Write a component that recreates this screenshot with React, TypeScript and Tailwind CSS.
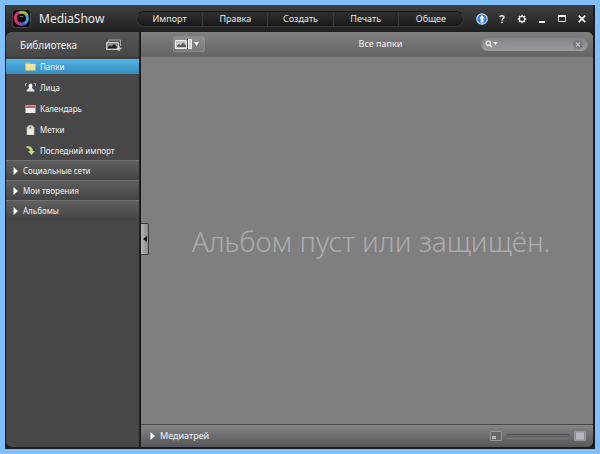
import {useState} from 'react';
import type {ReactNode} from 'react';

interface LibraryItem {
    id: string;
    label: string;
    icon: ReactNode;
}

const MENU = ['Импорт', 'Правка', 'Создать', 'Печать', 'Общее'];
const SECTIONS = ['Социальные сети', 'Мои творения', 'Альбомы'];

const Logo = () => (
    <svg className="h-[19px] w-[19px] shrink-0" viewBox="0 0 19 19" aria-hidden="true">
        <rect x="0.5" y="0.5" width="18" height="18" rx="3" fill="#0c0c0c" stroke="#484848"/>
        <g fill="none" strokeWidth="3" strokeLinecap="round">
            <path d="M9 15.200C5.500 15.400 3.400 12.500 3.400 9.500" stroke="#d8305c"/>
            <path d="M3.400 9C3.400 6 5.400 3.800 8 3.600" stroke="#ee2f7c"/>
            <path d="M8.600 3.500C11.400 3 14 4.400 15 6.600" stroke="#8cc43c"/>
            <path d="M15.200 7.500C16 10.500 14.500 13.600 12 14.600" stroke="#3a9ee0"/>
            <path d="M11.600 14.700C10.400 15.300 9 15.300 8 14.900" stroke="#6c4cd0"/>
        </g>
        <circle cx="9.400" cy="9.200" r="3.600" fill="#060606"/>
        <path d="M7.800 8C8.600 7 10.400 7 11.200 8" fill="none" stroke="#a8a8a8"/>
    </svg>
);

const FolderIcon = () => (
    <svg className="h-[9px] w-[11px]" viewBox="0 0 11 9" aria-hidden="true">
        <path d="M0.5 0.5h4l1 1.2H10.500V4H0.500z" fill="#dcc070"/>
        <path d="M0.5 2.600H10.5V8.500H0.5z" fill="#f6e08a"/>
        <path d="M0.5 3h10" stroke="#fff3b8"/>
    </svg>
);

const FacesIcon = () => (
    <svg className="h-[9px] w-[11px]" viewBox="0 0 11 9" aria-hidden="true">
        <path d="M2 0.5H0.5V3M9 0.5h1.500V3" fill="none" stroke="#a8a8a8"/>
        <ellipse cx="5.5" cy="2.900" rx="1.900" ry="2.300" fill="#f4f4f4"/>
        <path d="M1.500 8.500c0-2 1.700-2.800 2.900-3.400h2.200C7.800 5.700 9.500 6.500 9.500 8.500z" fill="#e4e4e4"/>
    </svg>
);

const CalendarIcon = () => (
    <svg className="h-[9px] w-[11px]" viewBox="0 0 11 9" aria-hidden="true">
        <path d="M0.500 1H10.500V9H0.500z" fill="#f2eded"/>
        <path d="M0.500 1H10.500V4H0.500z" fill="#c75a5c"/>
        <path d="M0.500 1.500h10" stroke="#e19a9a"/>
    </svg>
);

const TagIcon = () => (
    <svg className="h-[10px] w-[11px]" viewBox="0 0 11 10" aria-hidden="true">
        <path d="M4 0.200h3L9.300 2.600V10H1.700V2.600z" fill="#dcdcc6"/>
        <circle cx="5.500" cy="2.400" r="1" fill="#686858"/>
        <path d="M2.700 4.500h5.600V9H2.700z" fill="#f0f0e4"/>
    </svg>
);

const ImportIcon = () => (
    <svg className="h-[9px] w-[11px]" viewBox="0 0 11 9" aria-hidden="true">
        <path d="M1.500 0.300C5 0 7.800 0.800 7.800 5h2L6.500 9 3 5h2C5 3 4 2 1.500 2z" fill="#b9e07a"/>
    </svg>
);

const ITEMS: LibraryItem[] = [
    {id: 'folders', label: 'Папки', icon: <FolderIcon/>},
    {id: 'faces', label: 'Лица', icon: <FacesIcon/>},
    {id: 'calendar', label: 'Календарь', icon: <CalendarIcon/>},
    {id: 'tags', label: 'Метки', icon: <TagIcon/>},
    {id: 'last', label: 'Последний импорт', icon: <ImportIcon/>},
];

const Arrow = () => (
    <svg className="h-[8px] w-[5px] shrink-0" viewBox="0 0 5 8" aria-hidden="true">
        <path d="M0.500 0L5 4 0.500 8z" fill="#fff"/>
    </svg>
);

// Кнопки в правой части заголовка
const WINDOW_BUTTONS: { label: string; icon: ReactNode }[] = [
    {
        label: 'Обновление',
        icon: (
            <svg className="h-3 w-3" viewBox="0 0 12 12" aria-hidden="true">
                <circle cx="6" cy="6" r="5.200" fill="#1f78ea" stroke="#cfe2f8" strokeWidth="1.200"/>
                <path d="M6 2.200L9 5.600H7.400V9.400H4.600V5.600H3z" fill="#fff"/>
            </svg>
        ),
    },
    {
        label: 'Справка',
        icon: (
            <svg className="h-3 w-3" viewBox="0 0 12 12" aria-hidden="true">
                <path d="M4 4.200C4 2.200 8 2.200 8 4.200C8 5.600 6 5.600 6 7.400" fill="none" stroke="#e6e6e6"
                      strokeWidth="1.400"/>
                <path d="M5.200 8.500h1.600v1.500H5.200z" fill="#e6e6e6"/>
            </svg>
        ),
    },
    {
        label: 'Настройки',
        icon: (
            <svg className="h-3 w-3" viewBox="0 0 12 12" aria-hidden="true">
                <circle cx="6" cy="6" r="2.700" fill="none" stroke="#e6e6e6" strokeWidth="1.300"/>
                <path
                    d="M6 1.700v1.500M6 8.800v1.500M1.700 6h1.500M8.800 6h1.500M3 3l1.100 1.100M7.900 7.900L9 9M9 3L7.900 4.100M4.100 7.900L3 9"
                    stroke="#e6e6e6" strokeWidth="1.500"/>
            </svg>
        ),
    },
    {
        label: 'Свернуть',
        icon: (
            <svg className="h-3 w-3" viewBox="0 0 12 12" aria-hidden="true">
                <path d="M3 9h6" stroke="#f2f2f2" strokeWidth="2"/>
            </svg>
        ),
    },
    {
        label: 'Развернуть',
        icon: (
            <svg className="h-3 w-3" viewBox="0 0 12 12" aria-hidden="true">
                <path d="M2.500 3.500v5h7v-5" fill="none" stroke="#ddd"/>
                <path d="M2 3h8" stroke="#f2f2f2" strokeWidth="2"/>
            </svg>
        ),
    },
    {
        label: 'Закрыть',
        icon: (
            <svg className="h-3 w-3" viewBox="0 0 12 12" aria-hidden="true">
                <path d="M2.700 2.700l6.500 6.500M9.200 2.700L2.700 9.200" stroke="#f4f4f4" strokeWidth="1.700"/>
            </svg>
        ),
    },
];

function TitleBar() {
    return (
        <header className="flex h-[27px] shrink-0 items-center bg-linear-to-b from-[#404040] to-[#202020] pr-px">
            <div className="flex w-[130px] shrink-0 items-center gap-2 pl-[6px]">
                <Logo/>
                <h1 className="text-[12px] leading-4 text-[#ececec]">MediaShow</h1>
            </div>
            <nav
                className="grid h-4 flex-1 grid-cols-5 overflow-hidden rounded-full border border-[#383838] border-t-[#161616] bg-linear-to-b from-[#303030] to-[#191919]">
                {MENU.map((name, i) => (
                    <button
                        key={name}
                        className={`text-center text-[9px] leading-[14px] text-[#e8e8e8] ${i > 0 ? 'border-l border-[#3c3c3c]' : ''}`}
                    >
                        {name}
                    </button>
                ))}
            </nav>
            <div className="ml-2 flex shrink-0">
                {WINDOW_BUTTONS.map(({label, icon}) => (
                    <button key={label} aria-label={label} className="flex w-5 items-center justify-center">
                        {icon}
                    </button>
                ))}
            </div>
        </header>
    );
}

function Sidebar() {
    const [active, setActive] = useState('folders');

    return (
        <aside className="flex w-[133px] shrink-0 flex-col rounded-tl-md rounded-bl-md bg-[#474747]">
            <div
                className="flex h-[26px] items-center justify-between rounded-tl-md border-b border-[#333] bg-linear-to-b from-[#565656] to-[#464646] pr-[17px] pl-[14px]">
                <h2 className="text-[10px] leading-4 text-[#f0f0f0]">Библиотека</h2>
                <button aria-label="Добавить альбом">
                    <svg className="h-3 w-4" viewBox="0 0 16 12" aria-hidden="true">
                        <path d="M2.500 3V1H14.500v6" fill="none" stroke="#a8a8a8"/>
                        <path d="M0.500 3.500H12.500V10.500H0.500z" fill="#8c8c8c" stroke="#cfcfcf"/>
                        <path d="M2 9.500V8l2-1.500 1.500 1L8 5l3 3v1.500z" fill="#1e1e1e"/>
                        <path d="M13 7v5M10.500 9.500h5" stroke="#d0d0d0" strokeWidth="1.400"/>
                    </svg>
                </button>
            </div>

            <ul className="flex flex-col gap-[6px] pt-px pb-[2px]">
                {ITEMS.map(item => (
                    <li key={item.id}>
                        <button
                            onClick={() => setActive(item.id)}
                            className={`flex h-[15px] w-full items-center gap-1 pl-[19px] text-[8px] leading-[14px] text-[#f4f4f4] ${active === item.id ? 'bg-linear-to-b from-[#50b4e4] to-[#388cc0]' : ''}`}
                        >
                            <span className="flex w-[11px] shrink-0 justify-center">{item.icon}</span>
                            {item.label}
                        </button>
                    </li>
                ))}
            </ul>

            {SECTIONS.map(name => (
                <button
                    key={name}
                    className="flex h-5 items-center gap-[5px] border-t border-[#707070] bg-linear-to-b from-[#5e5e5e] to-[#444] pl-[7px] text-[8px] leading-[14px] text-[#f4f4f4]"
                >
                    <Arrow/>
                    {name}
                </button>
            ))}
        </aside>
    );
}

function Toolbar() {
    const [query, setQuery] = useState('');

    return (
        <div
            className="grid h-[25px] shrink-0 grid-cols-[1fr_auto_1fr] items-center rounded-tr-md border-b border-[#6a6a6a] bg-linear-to-b from-[#808080] to-[#656565] pr-[5px] pl-8">
            <button
                aria-label="Вид"
                className="flex h-4 w-8 items-center justify-between rounded-xs border border-[#8a8a8a] bg-linear-to-b from-[#8e8e8e] to-[#7a7a7a] px-px"
            >
                <svg className="h-3 w-[17px]" viewBox="0 0 17 12" aria-hidden="true">
                    <path d="M0.500 2.500H11.500V10.500H0.500z" fill="#c4c4c4" stroke="#f0f0f0"/>
                    <path d="M2 9V8l2-2 1.500 1.500L8 4.500l3 3V9z" fill="#5a5a5a"/>
                    <path d="M13.500 1.500h3v9h-3z" fill="#d0d0d0" stroke="#f0f0f0"/>
                    <path d="M12.500 1v10" stroke="#4a4a4a"/>
                </svg>
                <svg className="mr-1 h-1 w-[5px]" viewBox="0 0 5 4" aria-hidden="true">
                    <path d="M0 0h5L2.500 4z" fill="#eee"/>
                </svg>
            </button>
            <span className="text-[9px] leading-4 text-[#f4f4f4]">Все папки</span>
            <div
                className="flex h-[13px] w-[107px] items-center justify-self-end rounded-full bg-linear-to-b from-[#85868c] to-[#9a9ba0] px-1">
                <svg className="h-2 w-[13px] shrink-0" viewBox="0 0 13 8" aria-hidden="true">
                    <circle cx="3.300" cy="3.300" r="2.200" fill="none" stroke="#f2f2f2" strokeWidth="1.300"/>
                    <path d="M5 5l2 2.300" stroke="#f2f2f2" strokeWidth="1.500"/>
                    <path d="M8 2h5L10.500 5z" fill="#f2f2f2"/>
                </svg>
                <input
                    type="text"
                    aria-label="Поиск"
                    value={query}
                    onChange={e => setQuery(e.target.value)}
                    className="h-full min-w-0 flex-1 bg-transparent px-1 text-[9px] text-white outline-none"
                />
                <button aria-label="Очистить" onClick={() => setQuery('')}>
                    <svg className="h-[9px] w-[11px]" viewBox="0 0 11 9" aria-hidden="true">
                        <rect width="10" height="9" rx="4.500" fill="#7a7b80"/>
                        <path d="M3.200 2.700l3.600 3.600M6.800 2.700L3.200 6.300" stroke="#c4c4c8" strokeWidth="1.200"/>
                    </svg>
                </button>
            </div>
        </div>
    );
}

function TrayBar() {
    return (
        <footer
            className="flex h-[23px] shrink-0 items-center justify-between rounded-br-md border-t border-[#4a4a4a] bg-linear-to-b from-[#848486] to-[#56575c] pr-[7px] pl-[9px]">
            <button className="flex items-center gap-[5px] text-[9px] leading-4 text-[#f4f4f4]">
                <Arrow/>
                Медиатрей
            </button>
            <div className="flex items-center gap-1">
                <svg className="h-[10px] w-3" viewBox="0 0 12 10" aria-hidden="true">
                    <path d="M0.500 0.500H11.500V9.500H0.500z" fill="#66676b" stroke="#97989c"/>
                    <path d="M2 5h4v3H2z" fill="#b0b3bc"/>
                </svg>
                <input
                    type="range"
                    aria-label="Размер эскизов"
                    defaultValue={50}
                    className="h-[5px] w-16 appearance-none rounded-full border border-t-[#4c4d52] border-r-[#66676b] border-b-[#7c7d82] border-l-[#66676b] bg-[#68696e] [&::-webkit-slider-thumb]:appearance-none"
                />
                <svg className="h-[10px] w-3" viewBox="0 0 12 10" aria-hidden="true">
                    <path d="M0.500 0.500H11.500V9.500H0.500z" fill="#8c8d96" stroke="#97989c"/>
                    <path d="M2 1.500h8v7H2z" fill="#b6b8c6"/>
                </svg>
            </div>
        </footer>
    );
}

export default function App() {
    return (
        <div
            className="flex h-screen flex-col bg-[#7fc0fb] p-[5px] font-['Noto_Sans','Open_Sans',sans-serif] select-none">
            <div className="flex min-h-0 flex-1 flex-col bg-[#1c1c1c] pr-[2px] pb-[2px] pl-px">
                <TitleBar/>
                <div className="flex min-h-0 flex-1">
                    <Sidebar/>
                    <main
                        className="relative ml-[2px] flex min-w-0 flex-1 flex-col rounded-tr-md rounded-br-md bg-[#7f7f7f]">
                        <Toolbar/>
                        <div className="flex flex-1 items-center justify-center pl-2">
                            <p className="text-[28px] leading-9 font-light whitespace-nowrap text-[#adadad]">
                                Альбом пуст или защищён.
                            </p>
                        </div>
                        <TrayBar/>
                        {/* Ручка сворачивания боковой панели */}
                        <button
                            aria-label="Свернуть панель"
                            className="absolute top-[191px] left-0 flex h-8 w-2 items-center justify-center rounded-r-xs border border-l-0 border-[#3a3a3a] bg-linear-to-r from-[#b4b4b8] to-[#8c8c90]"
                        >
                            <svg className="h-[6px] w-1" viewBox="0 0 4 6" aria-hidden="true">
                                <path d="M4 0v6L0 3z" fill="#151515"/>
                            </svg>
                        </button>
                    </main>
                </div>
            </div>
        </div>
    );
}
